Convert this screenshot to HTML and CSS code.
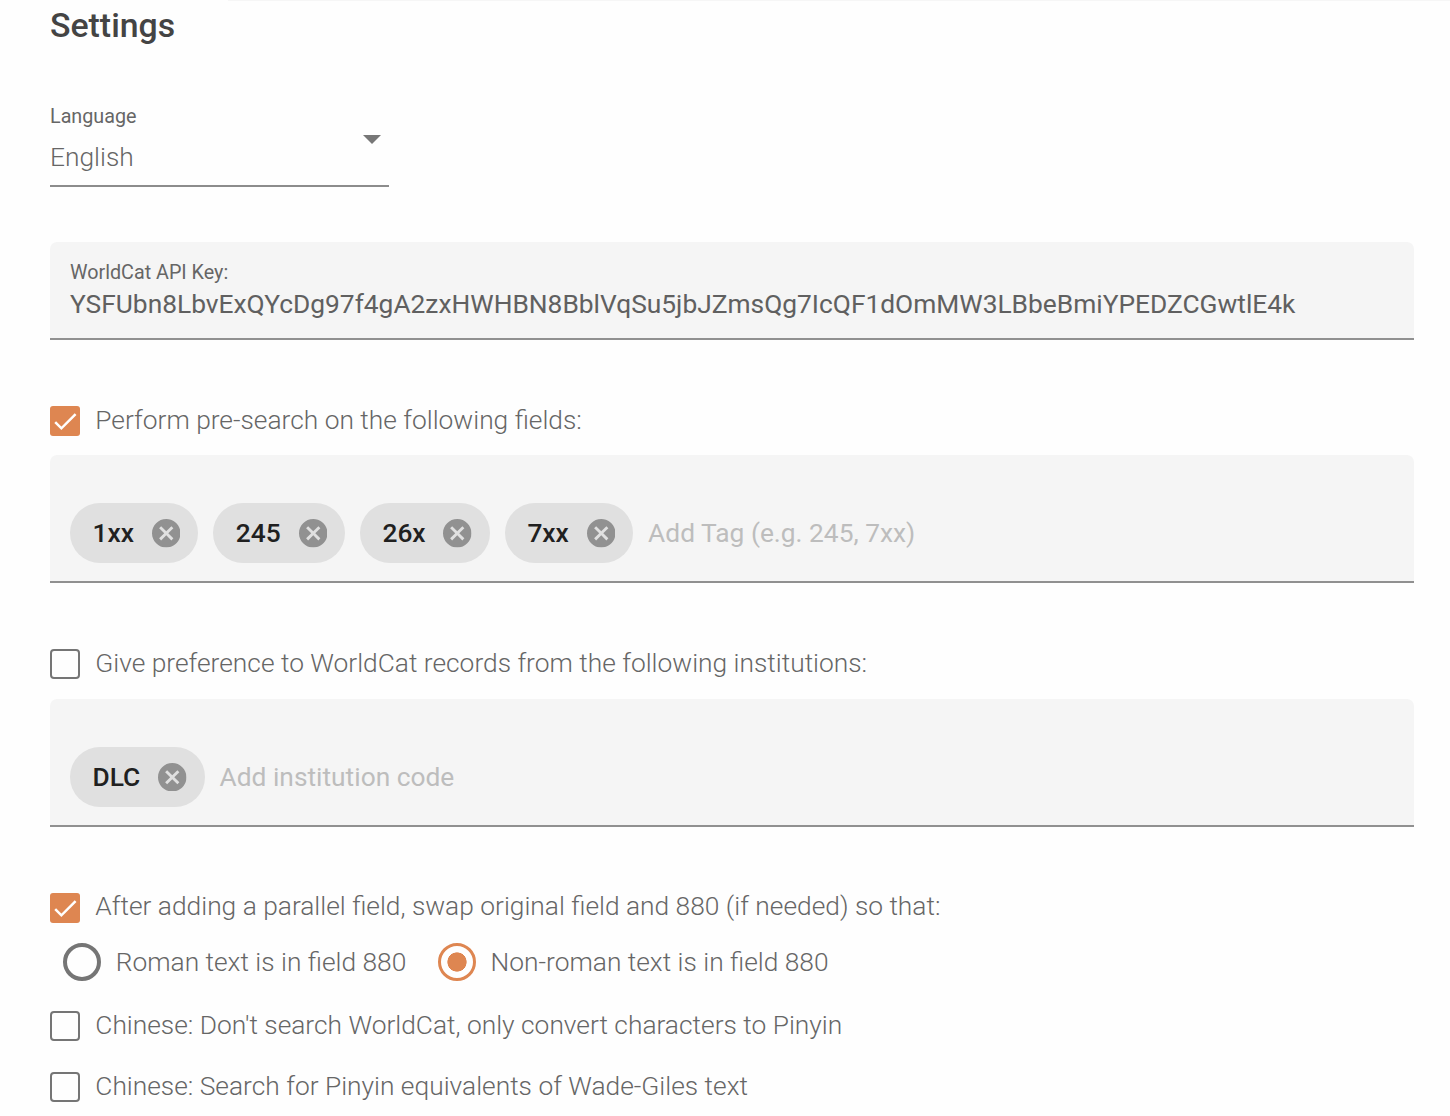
FILE: index.html
```html
<!DOCTYPE html>
<html lang="en">
<head>
<meta charset="utf-8">
<title>Settings</title>
<link rel="stylesheet" href="styles.css">
</head>
<body>
<svg class="defs" width="0" height="0" aria-hidden="true">
  <symbol id="cancel" viewBox="2 2 20 20"><path d="M12 2C6.47 2 2 6.47 2 12s4.47 10 10 10 10-4.47 10-10S17.53 2 12 2zm5 13.59L15.59 17 12 13.41 8.41 17 7 15.59 10.59 12 7 8.41 8.41 7 12 10.59 15.59 7 17 8.41 13.41 12 17 15.59z"/></symbol>
  <symbol id="check" viewBox="0 0 30 30"><path d="M5.2 16.1 L11.4 22.3 L25.6 8.1" fill="none" stroke="#fff" stroke-width="2.5"/></symbol>
</svg>
<main class="settings">
  <div class="top-rule"></div>
  <h1 class="title">Settings</h1>

  <div class="select">
    <div class="label">Language</div>
    <div class="select-row">
      <span class="select-value">English</span>
      <span class="arrow"></span>
    </div>
  </div>

  <div class="field key-field">
    <div class="label">WorldCat API Key:</div>
    <div class="key-value">YSFUbn8LbvExQYcDg97f4gA2zxHWHBN8BblVqSu5jbJZmsQg7IcQF1dOmMW3LBbeBmiYPEDZCGwtlE4k</div>
  </div>

  <div class="option presearch">
    <span class="box checked"><svg><use href="#check"/></svg></span>
    <span class="text">Perform pre-search on the following fields:</span>
  </div>
  <div class="field chips">
    <span class="chip">1xx<svg class="cancel"><use href="#cancel"/></svg></span>
    <span class="chip">245<svg class="cancel"><use href="#cancel"/></svg></span>
    <span class="chip">26x<svg class="cancel"><use href="#cancel"/></svg></span>
    <span class="chip">7xx<svg class="cancel"><use href="#cancel"/></svg></span>
    <span class="placeholder">Add Tag (e.g. 245, 7xx)</span>
  </div>

  <div class="option preference">
    <span class="box"></span>
    <span class="text">Give preference to WorldCat records from the following institutions:</span>
  </div>
  <div class="field chips institutions">
    <span class="chip">DLC<svg class="cancel"><use href="#cancel"/></svg></span>
    <span class="placeholder">Add institution code</span>
  </div>

  <div class="option swap">
    <span class="box checked"><svg><use href="#check"/></svg></span>
    <span class="text">After adding a parallel field, swap original field and 880 (if needed) so that:</span>
  </div>
  <div class="radios">
    <span class="radio"></span>
    <span class="text first">Roman text is in field 880</span>
    <span class="radio selected"></span>
    <span class="text">Non-roman text is in field 880</span>
  </div>
  <div class="option pinyin">
    <span class="box"></span>
    <span class="text">Chinese: Don't search WorldCat, only convert characters to Pinyin</span>
  </div>
  <div class="option wade">
    <span class="box"></span>
    <span class="text">Chinese: Search for Pinyin equivalents of Wade-Giles text</span>
  </div>
</main>
</body>
</html>
```
FILE: styles.css
```css
* { box-sizing: border-box; }
body {
  margin: 0;
  background: #fefefe;
  font-family: Roboto, "Liberation Sans", sans-serif;
  font-size: 26.33px;
  color: #666;
  overflow: hidden;
}
.defs { display: block; height: 0; }
.settings {
  width: 1450px;
  height: 1116px;
  padding: 0 35.6px 0 50px;
  overflow: hidden;
}
.top-rule {
  height: 1px;
  margin: 0 -36px 5px 178px;
  background: #f6f6f6;
}
.title {
  margin: 0;
  font-size: 33.85px;
  line-height: 40px;
  font-weight: 500;
  color: #444;
}
.label {
  font-size: 19.74px;
  line-height: 24px;
  font-weight: 400;
  color: #666;
}
.select {
  width: 339px;
  height: 82px;
  margin-top: 59px;
  border-bottom: 2px solid #8c8c8c;
}
.select-row {
  display: flex;
  justify-content: space-between;
  padding: 6px 8px 0 0;
}
.select-value { font-weight: 300; line-height: 44px; }
.arrow {
  width: 0;
  height: 0;
  border: 9.4px solid transparent;
  border-top-color: #777;
  border-bottom: 0;
}
.field {
  background: #f5f5f5;
  border-bottom: 2px solid #909090;
  border-radius: 7px 7px 0 0;
}
.key-field {
  height: 98px;
  margin-top: 54.5px;
  padding: 19.5px 20px 0;
}
.key-value { line-height: 38px; color: #606060; white-space: nowrap; }
.option { display: flex; align-items: flex-start; height: 31px; gap: 15.3px; }
.text { font-weight: 300; line-height: 28px; white-space: nowrap; }
.box {
  width: 30px;
  height: 30px;
  flex: none;
  border: 2px solid #757575;
  border-radius: 4px;
}
.box.checked { background: #de8651; border: 0; border-radius: 3px; }
.box svg { display: block; width: 30px; height: 30px; }
.presearch { margin-top: 66.5px; }
.chips {
  display: flex;
  align-items: flex-start;
  height: 127.5px;
  margin-top: 18px;
  padding: 48.3px 20px 0;
  gap: 15px;
}
.chip {
  display: flex;
  align-items: center;
  gap: 17.9px;
  height: 60px;
  padding: 0 17.9px 0 22.5px;
  border-radius: 30px;
  background: #e0e0e0;
  color: #202020;
  font-weight: 500;
}
.cancel { width: 28.5px; height: 28.5px; fill: #919191; flex: none; }
.placeholder { line-height: 60px; color: #bdbdbd; }
.preference { margin-top: 66.5px; }
.institutions { height: 128px; margin-top: 19px; padding-top: 48px; }
.swap { margin-top: 66px; }
.swap .text { line-height: 27px; }
.radios {
  display: flex;
  align-items: center;
  height: 38px;
  margin: 19px 0 0 13px;
}
.radio {
  width: 38px;
  height: 38px;
  margin-right: 14.7px;
  border: 4px solid #757575;
  border-radius: 50%;
  flex: none;
}
.radio.selected {
  border-color: #de8651;
  border-width: 3px;
  background: radial-gradient(circle, #de8651 9.3px, transparent 9.9px);
}
.first { width: 322.2px; }
.pinyin { margin-top: 30px; }
.wade { margin-top: 30px; }
```
